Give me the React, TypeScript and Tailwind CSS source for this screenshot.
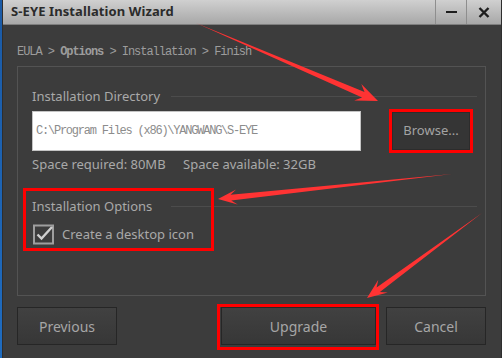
import React from "react";

function arrowPoints(
  x1: number,
  y1: number,
  x2: number,
  y2: number,
  headLen = 18,
  headHalf = 8,
  shaftHalf = 2.6
) {
  const dx = x2 - x1;
  const dy = y2 - y1;
  const L = Math.hypot(dx, dy);
  const ux = dx / L;
  const uy = dy / L;
  const nx = -uy;
  const ny = ux;
  const bx = x2 - ux * headLen;
  const by = y2 - uy * headLen;
  const ix = bx + ux * 4;
  const iy = by + uy * 4;
  const pts: [number, number][] = [
    [x1, y1],
    [ix + nx * shaftHalf, iy + ny * shaftHalf],
    [bx + nx * headHalf - ux * 2, by + ny * headHalf - uy * 2],
    [x2, y2],
    [bx - nx * headHalf - ux * 2, by - ny * headHalf - uy * 2],
    [ix - nx * shaftHalf, iy - ny * shaftHalf],
  ];
  return pts.map((p) => `${p[0].toFixed(1)},${p[1].toFixed(1)}`).join(" ");
}

const ui = { fontFamily: '"Noto Sans", "Open Sans", sans-serif' };
const mono = { fontFamily: '"Liberation Mono", "DejaVu Sans Mono", monospace' };

export default function App() {
  return (
    <div className="relative w-[502px] h-[358px] overflow-hidden bg-[#1b62b3] flex" style={ui}>
      <div className="w-[2px] shrink-0 bg-gradient-to-b from-[#1b5aa5] to-[#1f6cc0]" />
      <div className="w-[500px] shrink-0 flex flex-col bg-[#3c3c3c] border-l border-r border-[#2e2e2e]">
        {/* Title bar */}
        <div className="h-[25px] shrink-0 flex items-stretch bg-gradient-to-b from-[#d0d0d0] to-[#a8a8a8] border-b border-[#7e7e7e]">
          <div className="flex-1 flex items-center pl-[8px] text-[13px] font-bold text-[#2b2b2b] tracking-[0.1px]" style={{ fontFamily: '"Noto Sans", sans-serif' }}>
            S-EYE Installation Wizard
          </div>
          <div className="w-[31px] border-l border-[#8e8e8e] flex items-center justify-center">
            <div className="w-[11px] h-[2px] bg-[#1e1e1e]" />
          </div>
          <div className="w-[35px] border-l border-[#8e8e8e] flex items-center justify-center">
            <svg width="12" height="11" viewBox="0 0 12 11">
              <path d="M1.5 1 L10.5 10 M10.5 1 L1.5 10" stroke="#1e1e1e" strokeWidth="2.4" />
            </svg>
          </div>
        </div>

        {/* Body */}
        <div className="flex-1 flex flex-col pl-[14px] pr-[15px] pt-[19px]">
          <div className="h-[16px] leading-[16px] text-[12px] text-[#9c9c9c] tracking-[-1.04px] whitespace-nowrap" style={mono}>
            EULA &gt; <span className="font-bold">Options</span> &gt; Installation &gt; Finish
          </div>

          <div className="mt-[6px] h-[230px] border border-[#535353] pl-[14px] pr-[8px] pt-[20px] flex flex-col">
            {/* Directory header */}
            <div className="flex items-center h-[18px]">
              <div className="w-[139px] shrink-0 text-[13px] leading-[18px] text-[#a9a9a9] whitespace-nowrap">Installation Directory</div>
              <div className="flex-1 h-px bg-[#4c4c4c]" />
            </div>
            <div className="mt-[6px] flex items-center">
              <div className="w-[329px] h-[40px] bg-white border border-[#c4c4c4] flex items-center pl-[3px] text-[12px] text-[#8c8c8c] tracking-[-1.23px] whitespace-nowrap" style={mono}>
                C:\Program Files (x86)\YANGWANG\S-EYE
              </div>
              <div className="ml-[31px] w-[78px] h-[38px] bg-[#353535] border border-[#2c2c2c] flex items-center justify-center text-[13px] text-[#a3a3a3]">
                Browse...
              </div>
            </div>
            <div className="mt-[4px] h-[18px] leading-[18px] text-[13px] text-[#a9a9a9] flex whitespace-nowrap">
              <span className="w-[151px]">Space required: 80MB</span>
              <span>Space available: 32GB</span>
            </div>

            {/* Options header */}
            <div className="mt-[24px] flex items-center h-[18px]">
              <div className="w-[139px] shrink-0 text-[13px] leading-[18px] text-[#a9a9a9] whitespace-nowrap">Installation Options</div>
              <div className="flex-1 h-px bg-[#4c4c4c]" />
            </div>
            <div className="mt-[9px] flex items-center h-[20px]">
              <svg width="22" height="21" viewBox="0 0 22 21" className="ml-[1px] shrink-0">
                <rect x="1" y="1.5" width="19" height="18" fill="#3c3c3c" stroke="#9e9e9e" strokeWidth="2" />
                <path d="M4.5 10.5 L8.5 14.5 L19 3" fill="none" stroke="#cfcfcf" strokeWidth="2.4" />
              </svg>
              <span className="ml-[7px] text-[13px] leading-[20px] text-[#a9a9a9] whitespace-nowrap">Create a desktop icon</span>
            </div>
          </div>

          {/* Bottom buttons */}
          <div className="mt-[11px] flex items-center">
            <div className="w-[100px] h-[38px] border border-[#262626] bg-gradient-to-b from-[#414141] to-[#373737] flex items-center justify-center text-[14px] text-[#a6a6a6]">
              Previous
            </div>
            <div className="ml-auto w-[155px] h-[38px] border border-[#262626] bg-gradient-to-b from-[#414141] to-[#373737] flex items-center justify-center text-[14px] text-[#a6a6a6]">
              Upgrade
            </div>
            <div className="ml-[10px] w-[100px] h-[38px] border border-[#262626] bg-gradient-to-b from-[#414141] to-[#373737] flex items-center justify-center text-[14px] text-[#a6a6a6]">
              Cancel
            </div>
          </div>
        </div>
      </div>

      {/* Annotation overlays */}
      <div className="absolute left-[389px] top-[109px] w-[84px] h-[44px] border-[3px] border-[#ff0000]" />
      <div className="absolute left-[23px] top-[188px] w-[191px] h-[63px] border-[3px] border-[#ff0000]" />
      <div className="absolute left-[217px] top-[304px] w-[162px] h-[46px] border-[3px] border-[#ff0000]" />
      <svg className="absolute left-0 top-0" width="502" height="358" viewBox="0 0 502 358">
        <polygon points={arrowPoints(196, 23, 378, 101, 20, 9, 3)} fill="#ff3333" />
        <polygon points={arrowPoints(452, 174, 218, 199, 17, 7.5, 2.8)} fill="#ff3333" />
        <polygon points={arrowPoints(482, 213, 367, 298, 18, 8, 2.8)} fill="#ff3333" />
      </svg>
    </div>
  );
}
